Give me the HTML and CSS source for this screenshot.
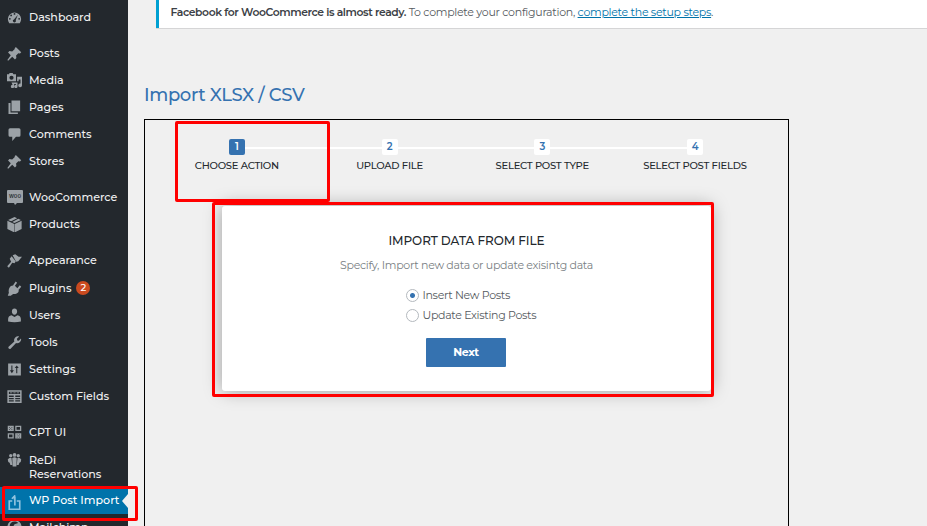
FILE: index.html
```
<!DOCTYPE html>
<html lang="en">
<head>
<meta charset="utf-8">
<title>Import XLSX / CSV</title>
<link rel="stylesheet" href="styles.css">
</head>
<body>
<nav class="sidebar">
  <a class="item"><svg class="icon" viewBox="0 0 20 20"><path fill-rule="evenodd" d="M3 17.500h14A8.800 8.800 0 1 0 3 17.500zM10 4a1.200 1.200 0 1 1 0 2.400 1.200 1.200 0 0 1 0-2.400zM5.500 6a1.200 1.200 0 1 1 0 2.400 1.200 1.200 0 0 1 0-2.400zM3.800 10.500a1.200 1.200 0 1 1 0 2.400 1.200 1.200 0 0 1 0-2.400zM16.200 10.500a1.200 1.200 0 1 1 0 2.400 1.200 1.200 0 0 1 0-2.400zM14.500 6.200 11.600 13.500a2 2 0 1 1-2.300-1z"/></svg><span class="t">Dashboard</span></a>
  <a class="item gap"><svg class="icon" viewBox="0 0 20 20"><path d="m10.400 3 1.400-1.800 7.200 7.100-1.700 1.600-2.200-.4-3 3 .4 3.500-1.900 1.900-3.600-3.600L1.500 19.700l-1-.9 4.500-6.500-3.600-3.700 1.900-1.900 3.600.6 3.200-3z"/></svg><span class="t">Posts</span></a>
  <a class="item"><svg class="icon" viewBox="0 0 20 20"><path fill-rule="evenodd" d="M0 1.500h2.500L3.500 0h4l1 1.500H12V11H0zM6 3.500a2.800 2.800 0 1 0 0 5.600 2.800 2.800 0 0 0 0-5.600zM13.500 5H20v11.500a2.500 2.500 0 1 1-2-2.400V8.500h-2.500V11H13.500zM6 12.500h8V18a2.200 2.200 0 1 1-2-2.200V14.500H9.500V18A2.200 2.200 0 1 1 7.500 15.800z"/></svg><span class="t">Media</span></a>
  <a class="item"><svg class="icon" viewBox="0 0 20 20"><path d="M6 .5h11.500V15H6zM2 4H4.700v12.500H14.500v2H2z"/></svg><span class="t">Pages</span></a>
  <a class="item"><svg class="icon" viewBox="0 0 20 20"><path d="M4 1.500h12q2 0 2 2v7.500q0 2-2 2h-4L7 18.500V13H4q-2 0-2-2V3.500q0-2 2-2z"/></svg><span class="t">Comments</span></a>
  <a class="item"><svg class="icon" viewBox="0 0 20 20"><path d="m10.400 3 1.400-1.800 7.200 7.100-1.700 1.600-2.200-.4-3 3 .4 3.500-1.900 1.900-3.600-3.600L1.500 19.700l-1-.9 4.500-6.500-3.600-3.700 1.900-1.900 3.600.6 3.200-3z"/></svg><span class="t">Stores</span></a>
  <a class="item gap"><span class="woo">woo</span><span class="t">WooCommerce</span></a>
  <a class="item"><svg class="icon" viewBox="0 0 20 20"><path d="m10 0 3.500 1.500L5.500 5.500 1.500 4zM15 2.200l3.500 1.800L10 8 7 6.500zM.5 5l9.200 4.200V20.500L.5 16zM19.500 5V16l-9.200 4.500V9.200z"/></svg><span class="t">Products</span></a>
  <a class="item gap"><svg class="icon" viewBox="0 0 20 20"><path d="M7.500 3 11 1.500l4.500 3.500L20 5l-5 6-2.800.5zM6.200 4.200l5.500 7-1.700 2.500-3-.6L2.500 19.500.3 17.500 5.500 11.500 3.600 7.500z"/></svg><span class="t">Appearance</span></a>
  <a class="item after"><svg class="icon" viewBox="0 0 20 20"><path d="m11.500.8 2 1.500-3 4 3.300 3.300L17 5.600l2 2-3.500 4c.7 3.500-2 6-7.300 5.600L5 19.500H1l1.500-3.700C1.500 10.500 4 6 8 6z"/></svg><span class="t">Plugins</span><span class="count">2</span></a>
  <a class="item"><svg class="icon" viewBox="0 0 20 20"><path d="M10 .5c2.200 0 3.500 1.600 3.500 4S12 9 10 9 6.500 6.900 6.500 4.500 7.800.5 10 .5zM6 9.500 10 12l4-2.500c3 .5 4.500 2.500 4.500 5V18q-8.500 2-17 0v-3.500c0-2.500 1.500-4.500 4.500-5z"/></svg><span class="t">Users</span></a>
  <a class="item"><svg class="icon" viewBox="0 0 20 20"><path d="M17 9.500c-1.500 1.500-3.300 1.700-4.900 1.200l-7.300 7.700c-1.500 1.300-4-1-2.700-2.600L9.800 8.600c-.7-1.600-.4-3.900 1.200-5.400s3.600-1.900 5.200-1.200l-3 3 .5 2.200 2 .5 2.900-2.900c.7 1.500.1 3.300-1.600 4.700z"/></svg><span class="t">Tools</span></a>
  <a class="item"><svg class="icon" viewBox="0 0 20 20"><path fill-rule="evenodd" d="M1.500 2H18.500v16h-17zM5.800 4.500v6.500H3.800l2.700 4 2.700-4h-2V4.500zM13 4.500l-2.700 3.500h2v7h1.400V8h2z"/></svg><span class="t">Settings</span></a>
  <a class="item"><svg class="icon" viewBox="0 0 20 20"><path fill-rule="evenodd" d="M.5 1.500h19v17H.5zM2.500 3.500v3H17.500v-3zM2.500 8.500v2H9v-2zM11 8.500v2h6.500v-2zM2.500 12v1.500H9V12zM11 12v1.500h6.500V12zM2.500 15v1.500H9V15zM11 15v1.500h6.500V15zM4 4.500h3v1H4zM8.500 4.500h3v1h-3zM13 4.500h3v1h-3z"/></svg><span class="t">Custom Fields</span></a>
  <a class="item gap"><svg class="icon" viewBox="0 0 20 20"><path fill-rule="evenodd" d="M1 1h8v7H1zM3 2.500v1h1v-1zM6 2.500v1h1v-1zM4.500 4v1h1V4zM3 5.500v1h1v-1zM6 5.500v1h1v-1zM11 1h8v7h-8zM12.700 2.700v3.600h4.600V2.700zM1 11h8v7H1zM2.700 12.700v3.600h4.600v-3.600zM11 11h8v7h-8zM13 12.500v1h1v-1zM16 12.500v1h1v-1zM14.500 14v1h1v-1zM13 15.500v1h1v-1zM16 15.500v1h1v-1z"/></svg><span class="t">CPT UI</span></a>
  <a class="item two"><svg class="icon" viewBox="0 0 20 20"><circle cx="5" cy="3.500" r="2.200"/><circle cx="10" cy="2.500" r="2.500"/><circle cx="15" cy="3.500" r="2.200"/><path d="M1 8.500q2-3 5-2l1 9.500H4.500l-1-3q-2.500-1-2.500-4.500zM7 7q3-2.500 6 0L12.500 18h-5zM14 6.500q3-1 5 2 0 3.500-2.500 4.500l-1 3h-2.500z"/></svg><span class="t">ReDi<br>Reservations</span></a>
  <a class="item current"><svg class="icon import" viewBox="0 0 20 20"><path d="M7 8H3v11h14V8H13M10.500 14V2M6.500 5 10 1.500V6"/></svg><span class="t">WP Post Import</span></a>
  <a class="item"><svg class="icon" viewBox="0 0 20 20"><path fill-rule="evenodd" d="M10 0a9.500 9.500 0 1 0 0 19 9.500 9.500 0 0 0 0-19zM10 2c2 0 3.500.5 5 2L10 5.500 6 13l-2-1C2.500 6 5 2 10 2z"/></svg><span class="t">Mailchimp</span></a>
</nav>
<main class="content">
  <div class="notice"><p><b>Facebook for WooCommerce is almost ready.</b> To complete your configuration, <a class="link">complete the setup steps</a>.</p></div>
  <h1>Import XLSX / CSV</h1>
  <section class="panel">
    <ol class="steps">
      <li class="active"><i>1</i>CHOOSE ACTION</li>
      <li><i>2</i>UPLOAD FILE</li>
      <li><i>3</i>SELECT POST TYPE</li>
      <li><i>4</i>SELECT POST FIELDS</li>
    </ol>
    <form class="card">
      <h2>IMPORT DATA FROM FILE</h2>
      <p class="hint">Specify, Import new data or update exisintg data</p>
      <div class="options">
        <label><span class="radio on"></span>Insert New Posts</label>
        <label><span class="radio"></span>Update Existing Posts</label>
      </div>
      <button type="button">Next</button>
    </form>
  </section>
</main>
<div class="mark mark-step"></div>
<div class="mark mark-card"></div>
<div class="mark mark-menu"></div>
</body>
</html>
```
FILE: styles.css
```
* { box-sizing: border-box; }
body { margin: 0; width: 927px; height: 526px; overflow: hidden; display: flex; position: relative; background: #f0f0f0; font: 400 11px/14px Montserrat, Inter, sans-serif; color: #555a60; }
.sidebar { width: 128px; height: 526px; flex: none; background: #23282d; padding-top: 4px; overflow: hidden; color: #f0f0f1; font-weight: 500; font-size: 11.1px; }
.item { display: flex; align-items: flex-start; height: 27px; padding: 6px 0 0 7px; white-space: nowrap; position: relative; }
.item .t { margin-left: 7px; }
.gap { margin-top: 9px; }
.after { height: 28px; padding-top: 7px; }
.two { height: 41px; padding-top: 7px; }
.icon { width: 15px; height: 15px; flex: none; fill: #9ca2a7; }
.current { background: #0073aa; color: #fff; }
.current::after { content: ""; position: absolute; right: 0; top: 7px; border: 7px solid transparent; border-left: 0; border-right: 6px solid #f0f0f0; }
.current .import { fill: none; stroke: #8fc3df; stroke-width: 2.2; margin-top: 2px; }
.woo { width: 16px; height: 13px; margin-right: -1px; flex: none; background: #9ca2a7; border-radius: 1px; color: #23282d; font: 500 6px/12px Inter, sans-serif; text-align: center; position: relative; }
.woo::after { content: ""; position: absolute; left: 7px; top: 13px; border: 2px solid transparent; border-top-color: #9ca2a7; border-left-width: 1px; }
.count { width: 14px; height: 14px; margin-left: 5px; border-radius: 50%; background: #ca4a1f; color: #fff; text-align: center; font-size: 10px; }
.content { flex: 1; height: 526px; overflow: hidden; }
.notice { height: 28px; margin-left: 28px; background: #fff; border-left: 3px solid #00a0d2; box-shadow: 0 1px 0 #d5d5d6; padding: 5px 0 0 11.500px; }
.notice p { margin: 0; white-space: nowrap; letter-spacing: -.28px; }
.notice b { font-weight: 600; font-size: 10.8px; letter-spacing: -.4px; color: #3c4146; }
.link { color: #0073aa; text-decoration: underline; }
h1 { margin: 55px 0 0 16px; height: 36px; color: #3572b0; font-size: 18px; line-height: 24px; font-weight: 500; letter-spacing: -.35px; }
.panel { margin-left: 16px; width: 645px; height: 420px; border: 1px solid #000; padding-top: 19px; }
.steps { list-style: none; display: flex; margin: 0 0 0 15.500px; padding: 0; height: 67px; }
.steps li { width: 152.700px; flex: none; position: relative; text-align: center; color: #23282d; font-weight: 500; font-size: 10px; letter-spacing: -.25px; white-space: nowrap; }
.steps li:not(:last-child)::after { content: ""; position: absolute; left: 84px; width: 137px; top: 8px; height: 2px; background: #fff; }
.steps i { display: block; width: 16px; height: 16px; margin: 0 auto 4px; border-radius: 2px; background: #fff; color: #3572b0; font: 600 10px/16px Montserrat, Inter, sans-serif; }
.steps .active i { background: #3572b0; color: #fff; }
.card { width: 489px; height: 185px; margin-left: 77px; background: #fff; border-radius: 3px; box-shadow: 0 0 18px rgba(0,0,0,.35); text-align: center; padding-top: 26px; }
h2 { margin: 0; font-size: 12px; line-height: 18px; font-weight: 500; letter-spacing: -.05px; color: #23282d; }
.hint { margin: 8px 0 0; color: #7a7f84; letter-spacing: -.29px; }
.options { display: flex; flex-direction: column; gap: 6px; margin: 16px 0 0 184px; letter-spacing: -.32px; }
.options label { display: flex; align-items: center; height: 14px; }
.radio { width: 13px; height: 13px; margin-right: 3.500px; border: 1px solid #b4b9be; border-radius: 50%; background: #fff; }
.on { background: radial-gradient(circle, #3572b0 2px, #fff 3px); }
button { display: block; margin: 16px 0 0 204px; width: 80px; height: 29px; padding: 0; border: 0; border-radius: 1px; background: #3572b0; color: #fff; font: 700 11px/29px Montserrat, Inter, sans-serif; letter-spacing: -.4px; }
.mark { position: absolute; border: 3px solid #f00; border-radius: 2px; }
.mark-step { left: 175px; top: 121px; width: 155px; height: 81px; }
.mark-card { left: 212px; top: 202px; width: 502px; height: 195px; }
.mark-menu { left: 2px; top: 486px; width: 136px; height: 35px; }
```
